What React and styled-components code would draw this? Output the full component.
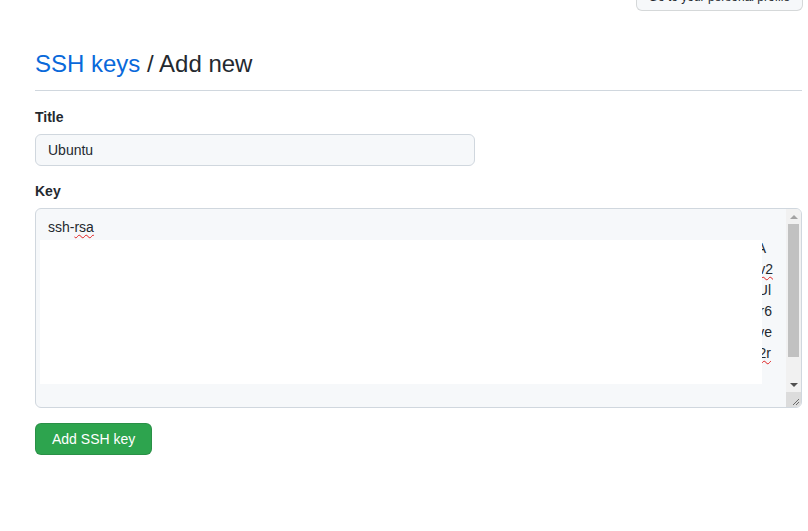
import React from 'react'
import styled, { createGlobalStyle } from 'styled-components'

const GlobalStyle = createGlobalStyle`
  html, body {
    margin: 0;
    padding: 0;
    background: #ffffff;
    font-family: "Liberation Sans", Arial, sans-serif;
    color: #24292f;
  }
`

const Page = styled.div({
  padding: '0 6px 40px 35px',
})

const TopBar = styled.div({
  height: '11px',
  display: 'flex',
  justifyContent: 'flex-end',
  alignItems: 'flex-end',
  overflow: 'hidden',
  marginRight: '-1px',
})

const SmallButton = styled.button({
  flex: 'none',
  height: '28px',
  padding: '0 12px',
  fontFamily: 'inherit',
  fontSize: '12px',
  lineHeight: '26px',
  color: '#24292f',
  background: '#f6f8fa',
  border: '1px solid rgba(27,31,36,0.15)',
  borderRadius: '6px',
})

const Header = styled.div({
  marginTop: '35px',
  paddingBottom: '8px',
  borderBottom: '1px solid #d0d7de',
})

const Heading = styled.h2({
  margin: 0,
  fontSize: '24px',
  fontWeight: 400,
  lineHeight: '36px',
  color: '#24292f',
})

const Crumb = styled.a({
  color: '#0969da',
  textDecoration: 'none',
})

const Form = styled.form({
  paddingTop: '16px',
})

const Group = styled.div({
  marginBottom: '15px',
})

const Label = styled.label({
  display: 'block',
  marginBottom: '6px',
  fontSize: '14px',
  fontWeight: 700,
  lineHeight: '21px',
})

const Input = styled.div({
  boxSizing: 'border-box',
  width: '440px',
  height: '32px',
  padding: '0 12px',
  fontSize: '14px',
  lineHeight: '30px',
  background: '#f6f8fa',
  border: '1px solid #d0d7de',
  borderRadius: '6px',
})

const TextBox = styled.div({
  position: 'relative',
  boxSizing: 'border-box',
  height: '200px',
  display: 'flex',
  background: '#f6f8fa',
  border: '1px solid #d0d7de',
  borderRadius: '6px',
  overflow: 'hidden',
})

const TextContent = styled.div({
  flex: 1,
  padding: '8px 13px 0 12px',
  fontSize: '14px',
  lineHeight: '21px',
})

const Line = styled.div(({ $end, $inset = 0 }) => ({
  textAlign: $end ? 'right' : 'left',
  whiteSpace: 'nowrap',
  paddingRight: $inset + 'px',
}))

const Misspelled = styled.span({
  textDecoration: 'underline wavy #e02020',
  textDecorationThickness: '1px',
  textUnderlineOffset: '2px',
})

const Redaction = styled.div({
  position: 'absolute',
  left: '4px',
  top: '31px',
  width: '722px',
  height: '144px',
  background: '#ffffff',
})

const ScrollBar = styled.div({
  width: '15px',
  display: 'flex',
  flexDirection: 'column',
  background: '#f1f1f1',
})

const Arrow = styled.div(({ $down }) => ({
  height: '15px',
  display: 'flex',
  alignItems: 'center',
  justifyContent: 'center',
  '&::before': {
    content: '""',
    borderLeft: '4px solid transparent',
    borderRight: '4px solid transparent',
    [$down ? 'borderTop' : 'borderBottom']: '4px solid ' + ($down ? '#505050' : '#a3a3a3'),
  },
}))

const Track = styled.div({
  flex: 1,
  padding: '0 2px',
})

const Thumb = styled.div({
  height: '133px',
  background: '#c1c1c1',
})

const Resizer = styled.div({
  height: '15px',
  background: '#dcdcdc',
  display: 'flex',
  justifyContent: 'flex-end',
  alignItems: 'flex-end',
})

const Button = styled.button({
  height: '32px',
  padding: '0 16px',
  fontFamily: 'inherit',
  fontSize: '14px',
  color: '#ffffff',
  background: '#2da44e',
  border: '1px solid rgba(27,31,36,0.15)',
  borderRadius: '6px',
  cursor: 'pointer',
})

const tails = [
  { inset: 7, text: <>A</> },
  { inset: 0, text: <>v<Misspelled>v2</Misspelled></> },
  { inset: 2, text: <>UUl</> },
  { inset: 1, text: <>rr6</> },
  { inset: 1, text: <>vve</> },
  { inset: 2, text: <>2<Misspelled>2r</Misspelled></> },
]

const App = () => {
  return (
    <Page>
      <GlobalStyle />
      <TopBar>
        <SmallButton>Go to your personal profile</SmallButton>
      </TopBar>
      <Header>
        <Heading>
          <Crumb href="#keys">SSH keys</Crumb> / Add new
        </Heading>
      </Header>
      <Form>
        <Group>
          <Label>Title</Label>
          <Input>Ubuntu</Input>
        </Group>
        <Group>
          <Label>Key</Label>
          <TextBox>
            <TextContent>
              <Line>ssh-<Misspelled>rsa</Misspelled></Line>
              {tails.map((t, i) => (
                <Line $end $inset={t.inset} key={i}>{t.text}</Line>
              ))}
            </TextContent>
            <Redaction />
            <ScrollBar>
              <Arrow />
              <Track>
                <Thumb />
              </Track>
              <Arrow $down />
              <Resizer>
                <svg width="15" height="15" viewBox="0 0 15 15">
                  <path d="M13 7 L7 13 M13 10 L10 13" stroke="#6b6b6b" strokeWidth="1" />
                </svg>
              </Resizer>
            </ScrollBar>
          </TextBox>
        </Group>
        <Button type="button">Add SSH key</Button>
      </Form>
    </Page>
  )
}

export default App
